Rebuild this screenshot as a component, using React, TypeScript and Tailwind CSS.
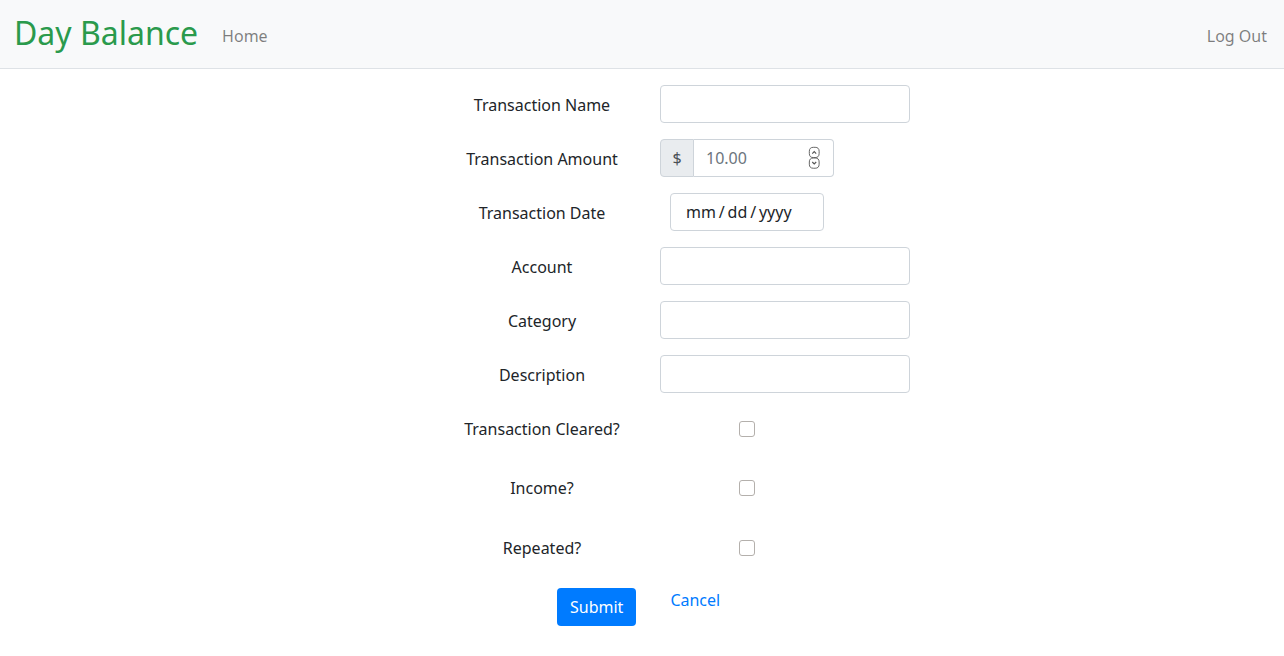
import React from "react";

const inputClass =
  "h-[38px] rounded-[4px] border border-[#ced4da] bg-white px-3 text-base text-[#495057] outline-none";

function Row({ label, children }: { label: string; children: React.ReactNode }) {
  return (
    <div className="mb-4 flex h-[38px] items-center">
      <label className="w-[184px] pt-[2px] text-center text-base text-[#212529]">{label}</label>
      <div className="ml-[26px] flex items-center">{children}</div>
    </div>
  );
}

function CheckRow({ label }: { label: string }) {
  return (
    <div className="mb-[19px] flex h-[40px] items-center">
      <label className="w-[184px] text-center text-base text-[#212529]">{label}</label>
      <div className="ml-[105px] h-4 w-4 rounded-[3px] border border-[#b4b0ac] bg-white" />
    </div>
  );
}

function Spinner() {
  return (
    <svg width="14" height="26" viewBox="0 0 14 26" className="text-[#555]">
      <rect x="1.5" y="1" width="11" height="11.5" rx="4.5" fill="none" stroke="currentColor" strokeWidth="1" />
      <rect x="1.5" y="13" width="11" height="11.5" rx="4.5" fill="none" stroke="currentColor" strokeWidth="1" />
      <path d="M4.8 8 L7 5.8 L9.2 8" fill="none" stroke="currentColor" strokeWidth="1.3" />
      <path d="M4.8 17.5 L7 19.7 L9.2 17.5" fill="none" stroke="currentColor" strokeWidth="1.3" />
    </svg>
  );
}

export default function App() {
  return (
    <div className="min-h-screen bg-white font-['Noto_Sans',sans-serif]">
      <nav className="flex h-[69px] items-center border-b border-[#dee2e6] bg-[#f8f9fa] pl-[14px] pr-[17px]">
        <a className="-mt-[3px] text-[32px] leading-none text-[#2a9a4c]">Day Balance</a>
        <a className="ml-[24px] mt-[4px] text-base text-black/50">Home</a>
        <a className="ml-auto mt-[4px] text-base text-black/50">Log Out</a>
      </nav>

      <form className="ml-[450px] pt-4">
        <Row label="Transaction Name">
          <input className={`${inputClass} w-[250px]`} />
        </Row>
        <Row label="Transaction Amount">
          <div className="flex h-[38px]">
            <span className="flex w-[34px] items-center justify-center rounded-l-[4px] border border-[#ced4da] bg-[#e9ecef] text-base text-[#495057]">
              $
            </span>
            <div className="flex w-[140px] items-center rounded-r-[4px] border border-l-0 border-[#ced4da] bg-white pl-3 pr-[13px]">
              <input
                className="w-full bg-transparent text-base text-[#495057] outline-none placeholder:text-[#6c757d]"
                placeholder="10.00"
              />
              <Spinner />
            </div>
          </div>
        </Row>
        <Row label="Transaction Date">
          <div className="ml-[10px] flex h-[38px] w-[154px] items-center rounded-[4px] border border-[#ced4da] bg-white pl-[15px] text-base text-[#212529] [word-spacing:-1.3px]">
            mm / dd / yyyy
          </div>
        </Row>
        <Row label="Account">
          <input className={`${inputClass} w-[250px]`} />
        </Row>
        <Row label="Category">
          <input className={`${inputClass} w-[250px]`} />
        </Row>
        <Row label="Description">
          <input className={`${inputClass} w-[250px]`} />
        </Row>

        <CheckRow label="Transaction Cleared?" />
        <CheckRow label="Income?" />
        <div className="pt-[1px]">
          <CheckRow label="Repeated?" />
        </div>

        <div className="mt-[20px] flex items-start pl-[107px]">
          <button
            type="button"
            className="h-[38px] rounded-[4px] bg-[#007bff] px-[13px] text-base text-white"
          >
            Submit
          </button>
          <a className="ml-[34px] mt-0 text-base text-[#007bff]">Cancel</a>
        </div>
      </form>
    </div>
  );
}
